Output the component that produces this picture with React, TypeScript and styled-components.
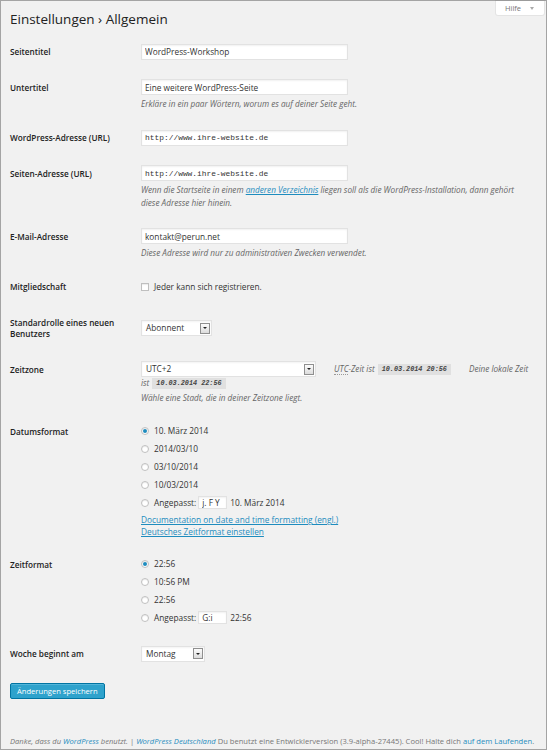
import React from "react";
import styled, { createGlobalStyle } from "styled-components";

const GlobalStyle = createGlobalStyle`
  html, body {
    margin: 0;
    padding: 0;
    background: #f1f1f1;
  }
  * {
    box-sizing: border-box;
  }
`;

const Frame = styled.div`
  position: relative;
  width: 547px;
  height: 750px;
  border: 1px solid #a4a4a4;
  background: #f1f1f1;
  padding: 9px 9px 0 9px;
  display: flex;
  flex-direction: column;
  font-family: "Open Sans", "Liberation Sans", sans-serif;
  color: #333;
`;

const HelpTab = styled.div`
  position: absolute;
  top: 0;
  right: 2px;
  width: 48px;
  height: 14px;
  background: #fff;
  box-shadow: 0 0 0 1px rgba(0, 0, 0, 0.05);
  border-radius: 0 0 2px 2px;
  display: flex;
  align-items: center;
  padding-left: 9px;
  gap: 9px;
  font-size: 7.5px;
  color: #777;
`;

const Caret = styled.span`
  width: 0;
  height: 0;
  border-left: 2px solid transparent;
  border-right: 2px solid transparent;
  border-top: 3px solid #aaa;
`;

const Title = styled.h2`
  margin: 0 0 5px;
  font-size: 13.5px;
  line-height: 18px;
  font-weight: 400;
  color: #222;
`;

const Row = styled.div`
  display: grid;
  grid-template-columns: 131px 1fr;
`;

const Label = styled.div`
  padding: 13px 10px 12px 0;
  font-size: 8.2px;
  line-height: 11px;
  font-weight: 600;
  color: #222;
`;

const Field = styled.div`
  align-self: center;
  padding: 10px 0 9px;
  font-size: 8.3px;
  line-height: 16px;
  color: #333;
`;

const TextInput = styled.input<{ $mono?: boolean; $w?: number }>`
  display: block;
  width: ${(p) => p.$w ?? 207}px;
  height: 16px;
  margin: 0;
  padding: 0 3px;
  border: 1px solid #e2e2e2;
  box-shadow: inset 0 1px 2px rgba(0, 0, 0, 0.06);
  background: #fff;
  color: #333;
  outline: none;
  font-family: ${(p) =>
    p.$mono ? '"Liberation Mono", monospace' : '"Open Sans", sans-serif'};
  font-size: ${(p) => (p.$mono ? "7.9px" : "8.3px")};
`;

const SmallInput = styled(TextInput)`
  display: inline-block;
  height: 13px;
  margin: 0 3px 0 2px;
  padding: 0 3px;
`;

const Desc = styled.p`
  margin: 2px 0 0;
  font-size: 8.2px;
  line-height: 13px;
  font-style: italic;
  color: #666;
`;

const Link = styled.a`
  color: #1e8cbe;
  text-decoration: underline;
`;

const FootLink = styled.a`
  color: #1e8cbe;
  text-decoration: none;
`;

const SelectBox = styled.div<{ $w: number }>`
  display: inline-flex;
  align-items: center;
  justify-content: space-between;
  width: ${(p) => p.$w}px;
  height: 16px;
  padding-left: 4px;
  padding-right: 1px;
  background: #fff;
  border: 1px solid #e2e2e2;
  box-shadow: inset 0 1px 2px rgba(0, 0, 0, 0.05);
  font-size: 8.3px;
  color: #333;
  vertical-align: top;
`;

const ArrowBtn = styled.span`
  width: 10px;
  height: 11px;
  border: 1px solid #8f8f8f;
  background: linear-gradient(#fcfcfc, #dcdcdc);
  display: flex;
  align-items: center;
  justify-content: center;
  &::after {
    content: "";
    border-left: 2px solid transparent;
    border-right: 2px solid transparent;
    border-top: 2.5px solid #222;
  }
`;

const Select: React.FC<{ width: number; value: string }> = ({ width, value }) => (
  <SelectBox $w={width}>
    <span>{value}</span>
    <ArrowBtn />
  </SelectBox>
);

const OptionLine = styled.label`
  display: flex;
  align-items: center;
  height: 16px;
  gap: 5px;
  & + & {
    margin-top: 2px;
  }
`;

const Radio = styled.span<{ $checked?: boolean }>`
  width: 8px;
  height: 8px;
  border-radius: 50%;
  border: 1px solid #bfbfbf;
  background: #fff;
  box-shadow: inset 0 1px 1px rgba(0, 0, 0, 0.08);
  display: flex;
  align-items: center;
  justify-content: center;
  &::after {
    content: "";
    width: 4px;
    height: 4px;
    border-radius: 50%;
    background: ${(p) => (p.$checked ? "#1e8cbe" : "transparent")};
  }
`;

const Checkbox = styled.span`
  width: 8px;
  height: 8px;
  border: 1px solid #bfbfbf;
  background: #fff;
  box-shadow: inset 0 1px 1px rgba(0, 0, 0, 0.08);
`;

const TzLine = styled.div`
  display: flex;
  align-items: center;
  height: 16px;
`;

const TzInfo = styled.span`
  margin-left: 18px;
  font-style: italic;
  font-size: 8.2px;
  color: #666;
  white-space: nowrap;
`;

const TzLine2 = styled.div`
  font-style: italic;
  font-size: 8.2px;
  line-height: 12px;
  color: #666;
`;

const Abbr = styled.abbr`
  text-decoration: none;
  border-bottom: 1px dotted #999;
`;

const Code = styled.code`
  display: inline-block;
  margin-left: 3px;
  padding: 0 4px;
  line-height: 11px;
  background: rgba(0, 0, 0, 0.07);
  font-family: "Liberation Mono", monospace;
  font-size: 6.8px;
  font-style: italic;
  font-weight: 700;
  color: #444;
  vertical-align: middle;
`;

const DocLinks = styled.div`
  margin-top: 3px;
  line-height: 11.5px;
  font-size: 8.3px;
`;

const SaveButton = styled.button`
  align-self: flex-start;
  margin-top: 12px;
  height: 16px;
  padding: 0 6px;
  border: 1px solid #0074a2;
  border-radius: 2px;
  background: #2ea2cc;
  box-shadow: inset 0 1px 0 rgba(120, 200, 230, 0.5);
  color: #fff;
  font-family: "Open Sans", sans-serif;
  font-size: 7.6px;
  line-height: 14px;
`;

const Footer = styled.div`
  margin-top: auto;
  padding-bottom: 2px;
  font-size: 7.6px;
  line-height: 12px;
  color: #777;
  white-space: nowrap;
`;

const Em = styled.span`
  font-style: italic;
`;

type Option = { label: string; checked?: boolean };

const dateOptions: Option[] = [
  { label: "10. März 2014", checked: true },
  { label: "2014/03/10" },
  { label: "03/10/2014" },
  { label: "10/03/2014" },
];

const timeOptions: Option[] = [
  { label: "22:56", checked: true },
  { label: "10:56 PM" },
  { label: "22:56" },
];

const App: React.FC = () => {
  return (
    <Frame>
      <GlobalStyle />
      <HelpTab>
        Hilfe <Caret />
      </HelpTab>
      <Title>Einstellungen › Allgemein</Title>

      <Row>
        <Label>Seitentitel</Label>
        <Field>
          <TextInput readOnly defaultValue="WordPress-Workshop" />
        </Field>
      </Row>

      <Row>
        <Label>Untertitel</Label>
        <Field>
          <TextInput readOnly defaultValue="Eine weitere WordPress-Seite" />
          <Desc>Erkläre in ein paar Wörtern, worum es auf deiner Seite geht.</Desc>
        </Field>
      </Row>

      <Row>
        <Label>WordPress-Adresse (URL)</Label>
        <Field>
          <TextInput $mono readOnly defaultValue="http://www.ihre-website.de" />
        </Field>
      </Row>

      <Row>
        <Label>Seiten-Adresse (URL)</Label>
        <Field>
          <TextInput $mono readOnly defaultValue="http://www.ihre-website.de" />
          <Desc>
            Wenn die Startseite in einem <Link href="#">anderen Verzeichnis</Link> liegen
            soll als die WordPress-Installation, dann gehört
            <br />
            diese Adresse hier hinein.
          </Desc>
        </Field>
      </Row>

      <Row>
        <Label>E-Mail-Adresse</Label>
        <Field>
          <TextInput readOnly defaultValue="kontakt@perun.net" />
          <Desc>Diese Adresse wird nur zu administrativen Zwecken verwendet.</Desc>
        </Field>
      </Row>

      <Row>
        <Label>Mitgliedschaft</Label>
        <Field>
          <OptionLine>
            <Checkbox />
            Jeder kann sich registrieren.
          </OptionLine>
        </Field>
      </Row>

      <Row>
        <Label>Standardrolle eines neuen Benutzers</Label>
        <Field>
          <Select width={71} value="Abonnent" />
        </Field>
      </Row>

      <Row>
        <Label>Zeitzone</Label>
        <Field>
          <TzLine>
            <Select width={175} value="UTC+2" />
            <TzInfo>
              <Abbr title="Coordinated Universal Time">UTC</Abbr>-Zeit ist
              <Code>10.03.2014 20:56</Code>
            </TzInfo>
            <TzInfo>Deine lokale Zeit</TzInfo>
          </TzLine>
          <TzLine2>
            ist<Code>10.03.2014 22:56</Code>
          </TzLine2>
          <Desc>Wähle eine Stadt, die in deiner Zeitzone liegt.</Desc>
        </Field>
      </Row>

      <Row>
        <Label>Datumsformat</Label>
        <Field>
          {dateOptions.map((o, i) => (
            <OptionLine key={i}>
              <Radio $checked={o.checked} />
              {o.label}
            </OptionLine>
          ))}
          <OptionLine>
            <Radio />
            <span>
              Angepasst:
              <SmallInput $w={29} readOnly defaultValue="j. F Y" />
              10. März 2014
            </span>
          </OptionLine>
          <DocLinks>
            <Link href="#">Documentation on date and time formatting (engl.)</Link>
            <br />
            <Link href="#">Deutsches Zeitformat einstellen</Link>
          </DocLinks>
        </Field>
      </Row>

      <Row>
        <Label>Zeitformat</Label>
        <Field>
          {timeOptions.map((o, i) => (
            <OptionLine key={i}>
              <Radio $checked={o.checked} />
              {o.label}
            </OptionLine>
          ))}
          <OptionLine>
            <Radio />
            <span>
              Angepasst:
              <SmallInput $w={29} readOnly defaultValue="G:i" />
              22:56
            </span>
          </OptionLine>
        </Field>
      </Row>

      <Row>
        <Label>Woche beginnt am</Label>
        <Field>
          <Select width={64} value="Montag" />
        </Field>
      </Row>

      <SaveButton>Änderungen speichern</SaveButton>

      <Footer>
        <Em>
          Danke, dass du <FootLink href="#">WordPress</FootLink> benutzt.
        </Em>{" "}
        |{" "}
        <Em>
          <FootLink href="#">WordPress Deutschland</FootLink>
        </Em>{" "}
        Du benutzt eine Entwicklerversion (3.9-alpha-27445). Cool! Halte dich{" "}
        <FootLink href="#">auf dem Laufenden</FootLink>.
      </Footer>
    </Frame>
  );
};

export default App;
